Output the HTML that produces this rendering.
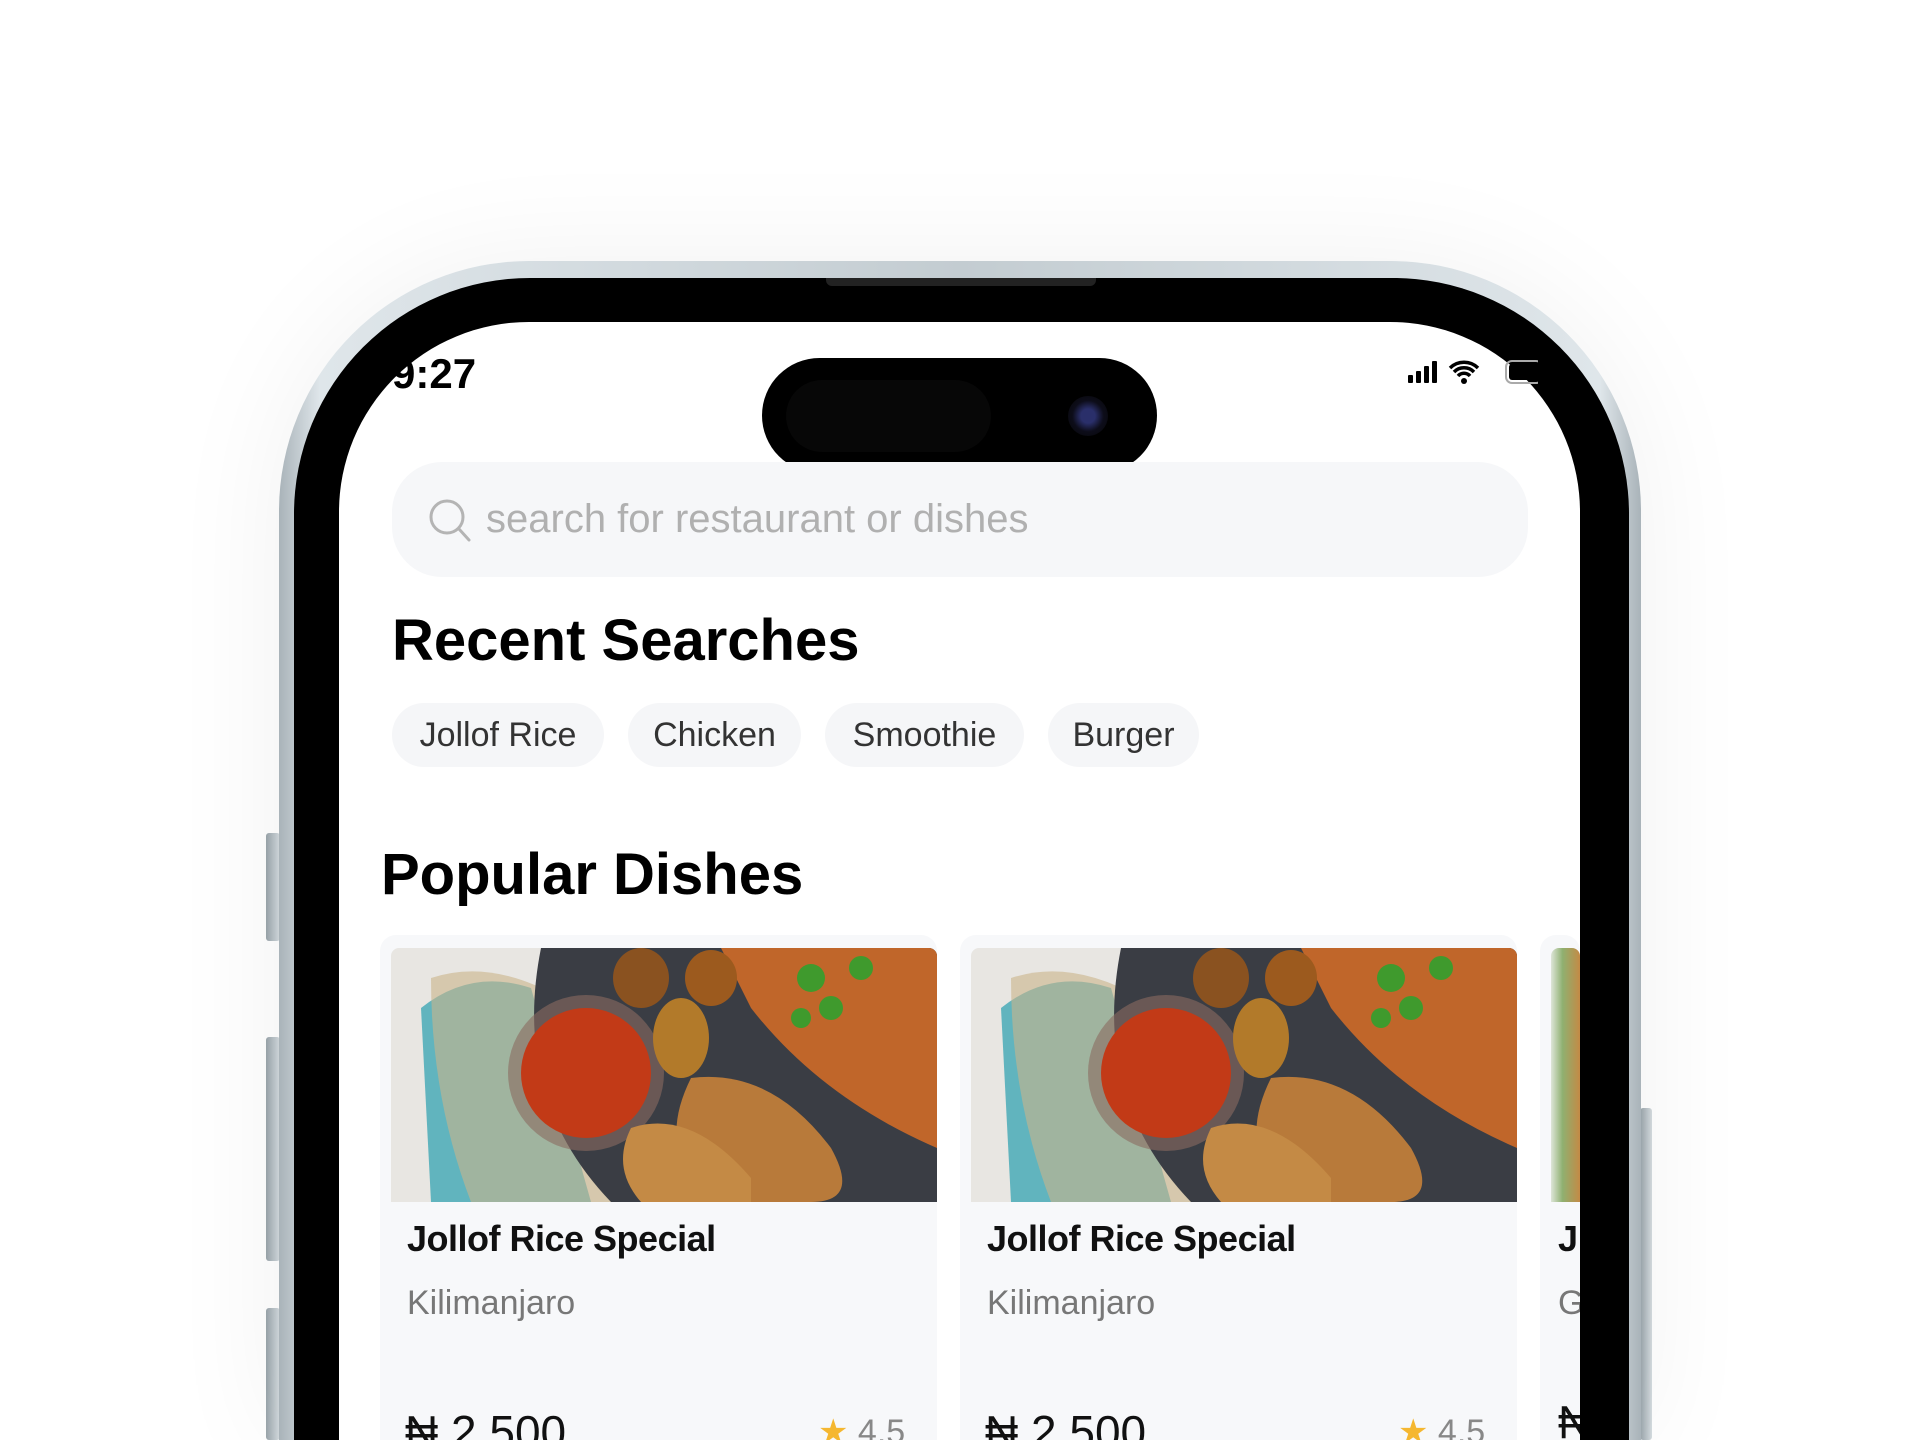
<!DOCTYPE html>
<html style="width:1920px;height:1440px;overflow:hidden"><head><meta charset="utf-8"><style>
*{margin:0;padding:0;box-sizing:border-box}
body{width:1920px;height:1440px;overflow:hidden;background:#fff;font-family:"Liberation Sans",sans-serif;position:relative}
#w{position:absolute;left:0;top:0;width:1920px;height:1440px;overflow:hidden}
.abs{position:absolute}
.frame{left:279px;top:261px;width:1362px;height:1179px;border-radius:250px 250px 0 0;background:linear-gradient(90deg,#a9b3b9,#dfe6ea 3%,#c3ccd1 50%,#dfe6ea 97%,#a9b3b9);box-shadow:0 0 120px rgba(0,0,0,.06)}
.bezel{left:294px;top:278px;width:1335px;height:1162px;border-radius:236px 236px 0 0;background:#000}
.screen{left:339px;top:322px;width:1241px;height:1118px;border-radius:190px 190px 0 0;background:#fff;overflow:hidden}
.btn{background:linear-gradient(90deg,#9aa5ab,#d6dde1);border-radius:3px}
.island{left:762px;top:358px;width:395px;height:115px;border-radius:58px;background:#000}
.chip{top:703px;height:64px;border-radius:32px;background:#f5f6f8;font-size:34px;color:#333;line-height:64px;text-align:center}
.card{top:935px;width:557px;height:505px;background:#f7f8fa;border-radius:16px 16px 0 0}
.img{top:948px;height:254px;overflow:hidden;border-radius:8px 8px 0 0}
.t{font-size:36px;color:#111;font-weight:bold;letter-spacing:-0.5px}
.s{font-size:34px;color:#777}
</style></head><body><div id="w">
<div class="abs btn" style="left:266px;top:833px;width:14px;height:108px"></div>
<div class="abs btn" style="left:266px;top:1037px;width:14px;height:224px"></div>
<div class="abs btn" style="left:266px;top:1308px;width:14px;height:132px"></div>
<div class="abs btn" style="left:1640px;top:1108px;width:12px;height:332px"></div>
<div class="abs frame"></div>
<div class="abs bezel"></div>
<div class="abs" style="left:826px;top:278px;width:270px;height:8px;background:#222;border-radius:0 0 6px 6px"></div>
<div class="abs screen"></div>
<div class="abs island"><div class="abs" style="left:24px;top:22px;width:205px;height:72px;border-radius:36px;background:#070707"></div><div class="abs" style="left:306px;top:38px;width:40px;height:40px;border-radius:50%;background:radial-gradient(circle,#2a2f6a 0 25%,#0d0d1a 55%,#050505)"></div></div>
<div class="abs" style="left:392px;top:350px;font-size:42px;font-weight:bold;color:#000">9:27</div>
<svg class="abs" style="left:1408px;top:358px" width="130" height="30" viewBox="0 0 130 30"><rect x="0" y="17" width="5" height="8" rx="1"/><rect x="8" y="13" width="5" height="12" rx="1"/><rect x="16" y="8" width="5" height="17" rx="1"/><rect x="24" y="3" width="5" height="22" rx="1"/><path d="M42 10a20 20 0 0 1 28 0M46 14a14 14 0 0 1 20 0M50 18a8 8 0 0 1 12 0" stroke="#000" stroke-width="3.5" fill="none"/><circle cx="56" cy="23" r="3"/><rect x="98" y="3" width="36" height="22" rx="6" fill="none" stroke="#aaa" stroke-width="2"/><rect x="101" y="6" width="30" height="16" rx="3"/></svg>
<div class="abs" style="left:392px;top:462px;width:1136px;height:115px;border-radius:50px;background:#f6f7f9"></div>
<svg class="abs" style="left:428px;top:498px" width="44" height="46" viewBox="0 0 44 46"><circle cx="19" cy="19" r="16" fill="none" stroke="#b4b4b4" stroke-width="3"/><path d="M31 31l10 11" stroke="#b4b4b4" stroke-width="3" stroke-linecap="round"/></svg>
<div class="abs" style="left:486px;top:497px;font-size:40px;color:#b0b0b0">search for restaurant or dishes</div>
<div class="abs" style="left:392px;top:607px;font-size:58px;font-weight:bold;color:#000">Recent Searches</div>
<div class="abs chip" style="left:392px;width:212px">Jollof Rice</div>
<div class="abs chip" style="left:628px;width:173px">Chicken</div>
<div class="abs chip" style="left:825px;width:199px">Smoothie</div>
<div class="abs chip" style="left:1048px;width:151px">Burger</div>
<div class="abs" style="left:381px;top:841px;font-size:58px;font-weight:bold;color:#000">Popular Dishes</div>

<div class="abs card" style="left:380px"></div>
<div class="abs card" style="left:960px"></div>
<div class="abs card" style="left:1540px;width:40px"></div>

<svg width="0" height="0" style="position:absolute"><defs>
<g id="food">
<rect width="546" height="254" fill="#e8e6e2"/>
<path d="M30 60 Q80 20 140 40 L200 254 L40 254 Z" fill="#3ea7b5" opacity=".8"/>
<path d="M40 30 Q100 10 170 50 L240 254 L80 254 Q40 150 40 30Z" fill="#c9b48a" opacity=".6"/>
<path d="M150 0 L546 0 L546 254 L220 254 Q120 150 150 0Z" fill="#3a3d44"/>
<path d="M330 0 L546 0 L546 200 Q430 150 360 60Z" fill="#c0662a"/>
<circle cx="195" cy="125" r="78" fill="#8a6b60" opacity=".6"/>
<circle cx="195" cy="125" r="65" fill="#c23a17"/>
<ellipse cx="290" cy="90" rx="28" ry="40" fill="#b27a2a"/>
<ellipse cx="250" cy="30" rx="28" ry="30" fill="#8a5220"/>
<ellipse cx="320" cy="30" rx="26" ry="28" fill="#9c5a1e"/>
<path d="M300 130 Q380 120 440 200 Q470 254 420 254 L330 254 Q260 210 300 130Z" fill="#b87a3a"/>
<path d="M240 180 Q300 160 360 230 L360 254 L250 254 Q220 220 240 180Z" fill="#c48a45"/>
<circle cx="420" cy="30" r="14" fill="#3f9a2d"/><circle cx="440" cy="60" r="12" fill="#3f9a2d"/><circle cx="470" cy="20" r="12" fill="#3f9a2d"/><circle cx="410" cy="70" r="10" fill="#3f9a2d"/>
</g></defs></svg>
<div class="abs img" style="left:391px;width:546px"><svg width="546" height="254"><use href="#food"/></svg></div>
<div class="abs img" style="left:971px;width:546px"><svg width="546" height="254"><use href="#food"/></svg></div>
<div class="abs img" style="left:1551px;width:29px;background:linear-gradient(90deg,#dde5d8,#8fb070 40%,#c48a45)"></div>

<div class="abs t" style="left:407px;top:1218px">Jollof Rice Special</div>
<div class="abs s" style="left:407px;top:1284px">Kilimanjaro</div>
<div class="abs" style="left:405px;top:1405px;font-size:46px;color:#111">₦ 2,500</div>
<div class="abs" style="left:818px;top:1412px;font-size:34px;color:#888"><span style="color:#f5b730">★</span> 4.5</div>
<div class="abs t" style="left:987px;top:1218px">Jollof Rice Special</div>
<div class="abs s" style="left:987px;top:1284px">Kilimanjaro</div>
<div class="abs" style="left:985px;top:1405px;font-size:46px;color:#111">₦ 2,500</div>
<div class="abs" style="left:1398px;top:1412px;font-size:34px;color:#888"><span style="color:#f5b730">★</span> 4.5</div>
<div class="abs t" style="left:1558px;top:1218px;width:22px;overflow:hidden">J</div>
<div class="abs s" style="left:1558px;top:1284px;width:22px;overflow:hidden">G</div>
<div class="abs" style="left:1558px;top:1395px;font-size:46px;width:22px;overflow:hidden;color:#111">₦</div>
<div class="abs" style="left:1580px;top:900px;width:49px;height:540px;background:#000"></div>
</div></body></html>
